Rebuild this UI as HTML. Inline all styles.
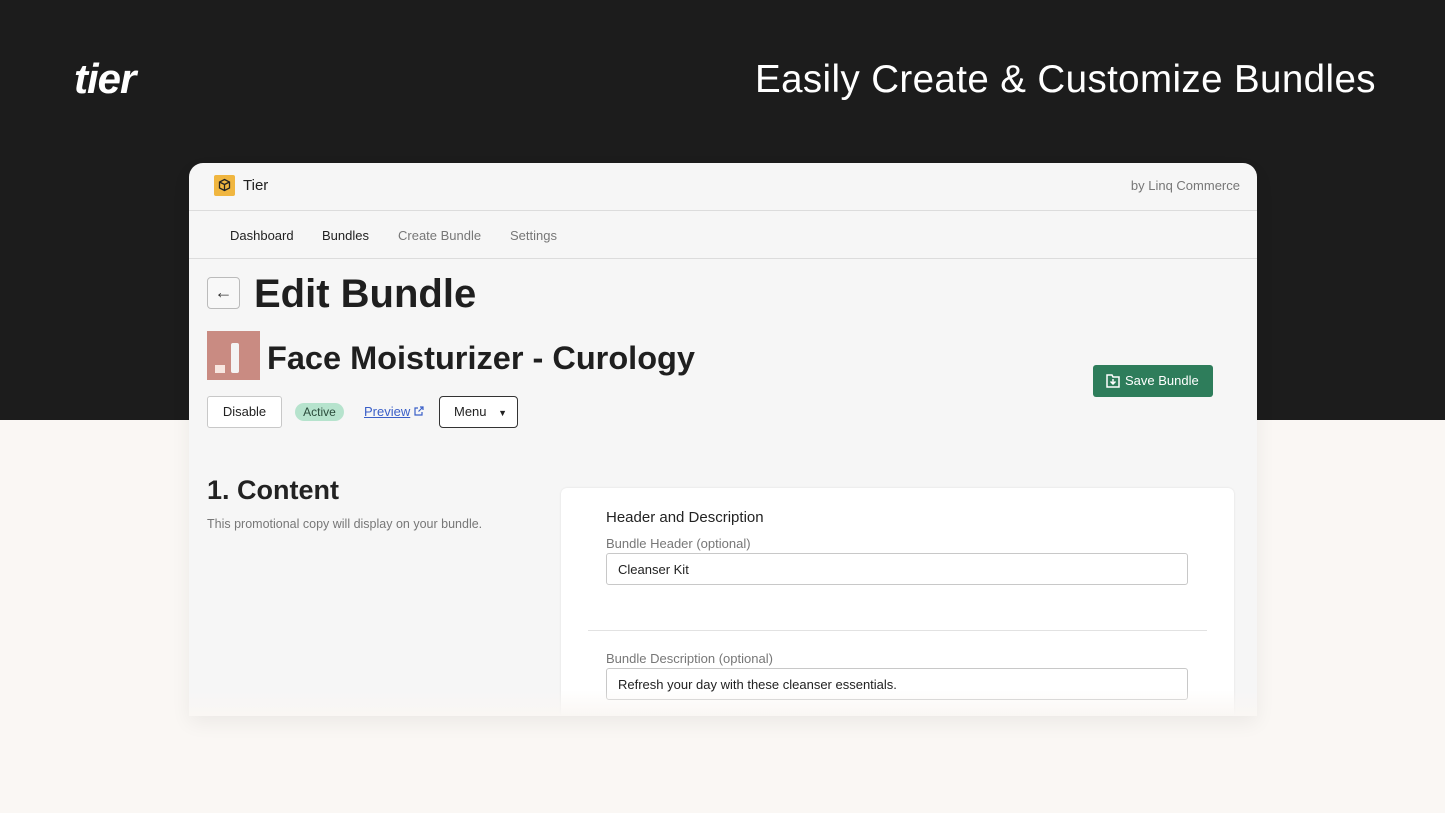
<!DOCTYPE html>
<html><head><meta charset="utf-8"><style>
*{margin:0;padding:0;box-sizing:border-box}
body{width:1445px;height:813px;position:relative;overflow:hidden;font-family:"Liberation Sans",sans-serif;background:#faf7f4}
.top{position:absolute;left:0;top:0;width:1445px;height:420px;background:#1c1c1c}
.logo{position:absolute;left:74px;top:55px;color:#fff;font-size:42px;font-weight:bold;font-style:italic;letter-spacing:-1px}
.tag{position:absolute;left:755px;top:58px;color:#fff;font-size:38.5px;letter-spacing:0.4px}
.card{position:absolute;left:189px;top:163px;width:1068px;height:552px;background:#f6f6f6;border-radius:14px 14px 0 0;overflow:hidden;box-shadow:0 8px 20px rgba(0,0,0,.06)}
.hdr{height:48px;border-bottom:1px solid #dcdcdc;position:relative}
.ic{position:absolute;left:25px;top:12px;width:21px;height:21px;background:#f0b640;border-radius:2px}
.t{position:absolute;left:54px;top:14px;font-size:15px;color:#222}
.by{position:absolute;right:17px;top:15px;font-size:13px;color:#777}
.nav{height:48px;border-bottom:1px solid #dcdcdc;position:relative;font-size:13px}
.nav span{position:absolute;top:17px}
.back{position:absolute;left:18px;top:114px;width:33px;height:32px;border:1px solid #bbb;border-radius:4px;background:#f8f8f8;text-align:center;font-size:18px;line-height:29px;color:#333}
h1{position:absolute;left:65px;top:109px;font-size:40px;color:#1f1f1f;font-weight:bold;letter-spacing:0}
.img{position:absolute;left:18px;top:168px;width:53px;height:49px;background:#c98b82}
h2{position:absolute;left:78px;top:177px;font-size:32.5px;color:#1f1f1f;font-weight:bold}
.btn{position:absolute;top:233px;height:32px;border:1px solid #c8c8c8;border-radius:3px;background:#fff;font-size:13px;color:#222;line-height:30px;text-align:center}
.save{position:absolute;left:904px;top:202px;width:120px;height:32px;background:#2e7d5b;border-radius:3px;color:#fff;font-size:13px;line-height:32px;padding-left:32px}
.sec{position:absolute;left:18px;top:312px;font-size:27px;font-weight:bold;color:#222}
.sub{position:absolute;left:18px;top:354px;font-size:12.5px;color:#777}
.panel{position:absolute;left:372px;top:325px;width:673px;height:240px;background:#fff;border-radius:6px;box-shadow:0 0 2px rgba(0,0,0,.1)}
.lbl{position:absolute;left:45px;font-size:13px;color:#777}
.inp{position:absolute;left:45px;width:582px;height:32px;border:1px solid #c8c8c8;border-radius:3px;font-size:13px;color:#222;padding:8px 11px}
.fade{position:absolute;left:189px;top:690px;width:1068px;height:26px;background:linear-gradient(rgba(250,247,244,0),#faf7f4)}
</style></head><body>
<div class="top"></div>
<div class="logo">tier</div>
<div class="tag">Easily Create &amp; Customize Bundles</div>
<div class="card">
<div class="hdr"><div class="ic"><svg width="21" height="21" viewBox="0 0 21 21"><path d="M10.5 4.5l5 2.5v6l-5 2.5-5-2.5v-6zM5.5 7l5 2.5 5-2.5M10.5 9.5v6" fill="none" stroke="#222" stroke-width="1.3"/></svg></div><div class="t">Tier</div><div class="by">by Linq Commerce</div></div>
<div class="nav"><span style="left:41px;color:#222">Dashboard</span><span style="left:133px;color:#222">Bundles</span><span style="left:209px;color:#777">Create Bundle</span><span style="left:321px;color:#777">Settings</span></div>
<div class="back">←</div>
<h1>Edit Bundle</h1>
<div class="img"><svg width="53" height="49"><rect x="24" y="12" width="8" height="30" rx="2" fill="#f4f4f4"/><rect x="8" y="34" width="10" height="8" fill="#f7e6e0"/></svg></div>
<h2>Face Moisturizer - Curology</h2>
<div class="btn" style="left:18px;width:75px">Disable</div>
<div style="position:absolute;left:106px;top:240px;width:49px;height:18px;border-radius:9px;background:#b6e3cd;font-size:12px;color:#2a4a3a;text-align:center;line-height:18px">Active</div>
<div style="position:absolute;left:175px;top:241px;font-size:13px;color:#3a5fc8;text-decoration:underline">Preview</div>
<svg style="position:absolute;left:225px;top:243px" width="10" height="10" viewBox="0 0 10 10"><path d="M4 2H1v7h7V6M6 1h3v3M9 1L4.5 5.5" fill="none" stroke="#3a5fc8" stroke-width="1.2"/></svg>
<div class="btn" style="left:250px;width:79px;border-color:#333;border-radius:4px;text-align:left;padding-left:14px">Menu <span style="font-size:9px;margin-left:8px">▼</span></div>
<div class="save"><svg style="position:absolute;left:13px;top:9px" width="14" height="14" viewBox="0 0 14 14"><path d="M1 1h5l1 2h6v10H1z" fill="none" stroke="#fff" stroke-width="1.5"/><path d="M7 5v5M4.5 7.5L7 10l2.5-2.5" fill="none" stroke="#fff" stroke-width="1.5"/></svg>Save Bundle</div>
<div class="sec">1. Content</div>
<div class="sub">This promotional copy will display on your bundle.</div>
<div class="panel">
<div style="position:absolute;left:45px;top:21px;font-size:15px;color:#222">Header and Description</div>
<div class="lbl" style="top:48px">Bundle Header (optional)</div>
<div class="inp" style="top:65px">Cleanser Kit</div>
<div style="position:absolute;left:27px;top:142px;width:619px;border-top:1px solid #e2e2e2"></div>
<div class="lbl" style="top:163px">Bundle Description (optional)</div>
<div class="inp" style="top:180px">Refresh your day with these cleanser essentials.</div>
</div>
</div>
<div class="fade"></div>
</body></html>
